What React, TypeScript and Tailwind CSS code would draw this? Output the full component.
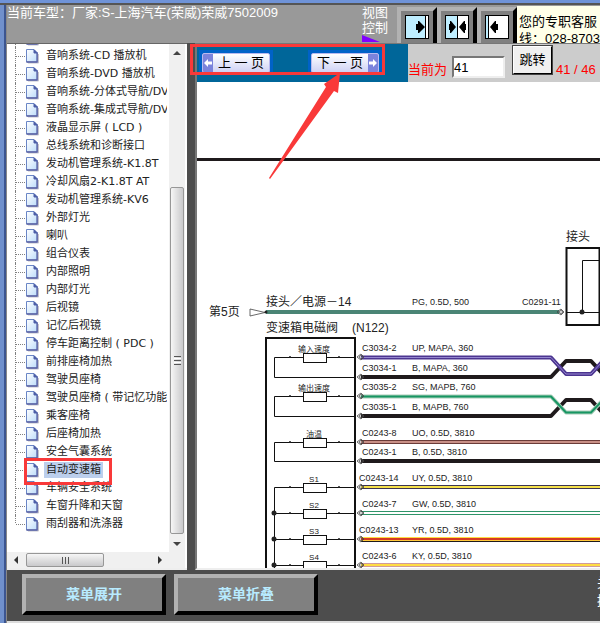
import { useState } from "react";

const treeItems = [
  "音响系统",
  "音响系统-CD 播放机",
  "音响系统-DVD 播放机",
  "音响系统-分体式导航/DVD",
  "音响系统-集成式导航/DVD",
  "液晶显示屏 ( LCD )",
  "总线系统和诊断接口",
  "发动机管理系统-K1.8T",
  "冷却风扇2-K1.8T AT",
  "发动机管理系统-KV6",
  "外部灯光",
  "喇叭",
  "组合仪表",
  "内部照明",
  "内部灯光",
  "后视镜",
  "记忆后视镜",
  "停车距离控制 ( PDC )",
  "前排座椅加热",
  "驾驶员座椅",
  "驾驶员座椅 ( 带记忆功能 )",
  "乘客座椅",
  "后座椅加热",
  "安全气囊系统",
  "自动变速箱",
  "车辆安全系统",
  "车窗升降和天窗",
  "雨刮器和洗涤器",
];

type Wire = {
  y: number;
  pin: string;
  label: string;
  pinX?: number;
};

const wires: Wire[] = [
  { y: 357, pin: "C3034-2", label: "UP, MAPA, 360" },
  { y: 377, pin: "C3034-1", label: "B, MAPA, 360" },
  { y: 396, pin: "C3035-2", label: "SG, MAPB, 760" },
  { y: 416, pin: "C3035-1", label: "B, MAPB, 760" },
  { y: 442, pin: "C0243-8", label: "UO, 0.5D, 3810" },
  { y: 461, pin: "C0243-1", label: "B, 0.5D, 3810" },
  { y: 487, pin: "C0243-14", label: "UY, 0.5D, 3810", pinX: 359 },
  { y: 513, pin: "C0243-7", label: "GW, 0.5D, 3810" },
  { y: 539, pin: "C0243-13", label: "YR, 0.5D, 3810", pinX: 359 },
  { y: 565, pin: "C0243-6", label: "KY, 0.5D, 3810" },
];

// wires that run straight to the edge, drawn as layered strokes
const straight = [
  { y: 442, layers: [["#6b3b38", 4], ["#c88f86", 2]] },
  { y: 461, layers: [["#1f1a1c", 4]] },
  { y: 487, layers: [["#3d3550", 4], ["#f5e04a", 2]] },
  { y: 513, layers: [["#2f9468", 4], ["#ffffff", 2]] },
  { y: 565, layers: [["#cf9a9c", 4], ["#ffdc42", 2]] },
] as { y: number; layers: [string, number][] }[];

const resistors = [
  { y: 357, name: "输入速度" },
  { y: 396, name: "输出速度" },
  { y: 442, name: "油温" },
  { y: 487, name: "S1" },
  { y: 513, name: "S2" },
  { y: 539, name: "S3" },
  { y: 565, name: "S4" },
];

function PageIcon() {
  return (
    <svg className="ml-px shrink-0" width="13" height="15" viewBox="0 0 13 15">
      <defs>
        <linearGradient id="paper" x1="0" y1="0" x2="1" y2="1">
          <stop offset="0" stopColor="#ffffff" />
          <stop offset="1" stopColor="#bcdcfa" />
        </linearGradient>
      </defs>
      <path d="M2 14H12.500V5" fill="none" stroke="#c4c4cc" />
      <path d="M0.500 0.500H8L11 3.500V13H0.500Z" fill="url(#paper)" stroke="#6a86c6" />
      <path d="M11.200 3.500V13H0.500" fill="none" stroke="#5b62a2" strokeWidth="1.300" />
      <path d="M8 0.800V4H11.200Z" fill="#4d5fa8" stroke="#4d5fa8" />
    </svg>
  );
}

function Tree() {
  const [selected, setSelected] = useState("自动变速箱");

  return (
    <ul className="-mt-[15px] w-max">
      {treeItems.map((item, index) => (
        <li key={index} className="relative flex h-[18px] items-center pl-[7px]">
          <span
            className={`w-px shrink-0 border-l border-dotted border-[#808080] ${
              index === treeItems.length - 1 ? "h-2 self-start" : "h-full"
            }`}
          ></span>
          <span className="w-[9px] shrink-0 border-t border-dotted border-[#808080]"></span>
          <PageIcon />
          <button
            className={`ml-[5px] h-4 px-[2px] text-[11px] leading-4 whitespace-nowrap text-[#222] ${
              selected === item ? "bg-[#bccfec]" : ""
            }`}
            onClick={() => setSelected(item)}
          >
            {item}
          </button>
          {selected === item && (
            <span className="pointer-events-none absolute -top-[3px] -right-2 left-4 z-10 h-[27px] max-w-[88px] border-3 border-[#f93939]"></span>
          )}
        </li>
      ))}
    </ul>
  );
}

function VerticalScrollbar() {
  return (
    <div className="flex w-4 shrink-0 flex-col items-center bg-[#f0f0f0]">
      <svg width="16" height="16" viewBox="0 0 16 16">
        <path d="M4 11L8 7L12 11Z" fill="#444" />
      </svg>
      <div className="grow-[130]"></div>
      <div className="flex w-[14px] grow-[344] flex-col items-center justify-center gap-px rounded-[2px] border border-[#979797] bg-linear-to-r from-[#f6f6f6] to-[#c9c9cb]">
        <span className="h-px w-[7px] bg-[#555]"></span>
        <span className="h-px w-[7px] bg-white"></span>
        <span className="h-px w-[7px] bg-[#555]"></span>
        <span className="h-px w-[7px] bg-white"></span>
        <span className="h-px w-[7px] bg-[#555]"></span>
      </div>
      <svg width="16" height="18" viewBox="0 0 16 18">
        <path d="M4 8L8 12L12 8Z" fill="#444" />
      </svg>
    </div>
  );
}

function HorizontalScrollbar() {
  return (
    <div className="flex h-4 shrink-0 items-center bg-[#f0f0f0] pr-4">
      <svg className="shrink-0" width="19" height="16" viewBox="0 0 19 16">
        <path d="M11 4L7 8L11 12Z" fill="#333" />
      </svg>
      <div className="flex h-[14px] w-[78px] items-center justify-center gap-[2px] rounded-[2px] border border-[#979797] bg-linear-to-b from-[#f6f6f6] to-[#c9c9cb]">
        <span className="h-[7px] w-px bg-[#555]"></span>
        <span className="h-[7px] w-px bg-[#555]"></span>
        <span className="h-[7px] w-px bg-[#555]"></span>
      </div>
      <div className="grow"></div>
      <svg className="shrink-0" width="16" height="16" viewBox="0 0 16 16">
        <path d="M5 4L9 8L5 12Z" fill="#333" />
      </svg>
    </div>
  );
}

function ViewButton({ kind, label }: { kind: "right" | "both" | "left"; label: string }) {
  return (
    <button
      aria-label={label}
      className="flex h-10 w-10 shrink-0 items-center justify-center border-4 border-t-[#b2b2b2] border-r-black border-b-[#777] border-l-[#b2b2b2] bg-[#808080]"
    >
      <svg width="24" height="24" viewBox="0 0 24 24">
        <rect x="0.500" y="0.500" width="23" height="23" fill="#fff" stroke="#000" />
        {kind === "right" && (
          <>
            <path d="M1 1H20V23H1Z" fill="#bfeeff" />
            <path d="M20.500 1V23" stroke="#000" />
            <path d="M11 9H13V6H14L20 12L14 18H13V15H11Z" fill="#000" />
          </>
        )}
        {kind === "both" && (
          <>
            <path d="M1 1H12V23H1Z" fill="#bfeeff" />
            <path d="M12.500 1V23" stroke="#000" />
            <path d="M4 9H5V6H6L11 12L6 18H5V15H4ZM21 9H20V6H19L14 12L19 18H20V15H21Z" fill="#000" />
          </>
        )}
        {kind === "left" && (
          <>
            <path d="M1 1H3V23H1Z" fill="#bfeeff" />
            <path d="M3.500 1V23" stroke="#000" />
            <path d="M13 9H11V6H10L5 12L10 18H11V15H13Z" fill="#000" />
          </>
        )}
      </svg>
    </button>
  );
}

function Arrow({ flip }: { flip?: boolean }) {
  return (
    <span className="flex w-[10px] items-center justify-center bg-[#7b83dc]">
      <svg className={flip ? "rotate-180" : ""} width="8" height="8" viewBox="0 0 8 8">
        <path d="M0 4L4 0V2.500H8V5.500H4V8Z" fill="#fff" />
      </svg>
    </span>
  );
}

function Header() {
  return (
    <header className="flex h-[38px] shrink-0 overflow-hidden bg-[#999] text-[13px] leading-[15px] text-white">
      <p className="min-w-0 flex-1 whitespace-nowrap">当前车型：厂家:S-上海汽车(荣威)荣威7502009</p>
      <div className="w-[35px] shrink-0">
        <p>视图控制</p>
        <svg width="18" height="7" viewBox="0 0 18 7">
          <path d="M0 0L18 7H0Z" fill="#8000ff" />
        </svg>
      </div>
      <div className="flex shrink-0 pt-[2px]">
        <ViewButton kind="right" label="展开菜单" />
        <ViewButton kind="both" label="平分视图" />
        <ViewButton kind="left" label="收起菜单" />
      </div>
      <div className="mt-px w-[83px] shrink-0 overflow-hidden bg-[#ffffe8] pt-[7px] pl-[2px] leading-[17px] whitespace-nowrap text-black">
        <p>您的专职客服</p>
        <p>线：028-870383</p>
      </div>
    </header>
  );
}

function Toolbar() {
  const [page, setPage] = useState("41");

  return (
    <div className="relative flex h-[38px] shrink-0 justify-between bg-[#069]">
      <div className="flex items-start gap-[35px] pt-[6px] pl-[2px] text-[13px] text-black">
        <button className="bg-[#0062c8] p-[3px] pb-0">
          <span className="flex h-5 w-[68px] overflow-hidden rounded-[2px] border border-[#b9b9ee] bg-linear-to-b from-white to-[#cfd2f4]">
            <Arrow />
            <span className="flex-1 text-center leading-[18px]">上 一 页</span>
          </span>
        </button>
        <button className="bg-[#0062c8] p-[3px] pb-0">
          <span className="flex h-5 w-[68px] overflow-hidden rounded-[2px] border border-[#b9b9ee] bg-linear-to-b from-white to-[#cfd2f4]">
            <span className="flex-1 text-center leading-[18px]">下 一 页</span>
            <Arrow flip />
          </span>
        </button>
      </div>
      <div className="flex w-48 shrink-0 bg-[#ccc] text-[13px] whitespace-nowrap text-[#f00]">
        <label htmlFor="page" className="pt-[17px] leading-[17px]">
          当前为
        </label>
        <input
          id="page"
          className="mt-3 ml-[5px] h-[22px] w-[53px] border-2 border-t-[#777] border-r-[#eee] border-b-[#eee] border-l-[#777] bg-white text-[13px] text-black outline-none"
          value={page}
          onChange={(e) => setPage(e.target.value)}
        />
        <button className="mt-[2px] ml-2 h-7 w-[39px] border border-t-white border-r-black border-b-black border-l-white bg-[#f0f0f0] text-[13px] text-black outline outline-[#444]">
          跳转
        </button>
        <span className="pt-[17px] pl-1 leading-[17px]">41 / 46</span>
      </div>

      {/* callout */}
      <div className="absolute top-0 -left-[7px] h-[31px] w-[195px] border-3 border-[#f93939]"></div>
      <svg className="absolute top-[29px] left-[69px]" width="80" height="108" viewBox="266 73 80 108">
        <path d="M269 178L326 87L324 84L340 73L338 93L334 91L270 179Z" fill="#f93939" />
      </svg>
    </div>
  );
}

function Pin({ y, x = 361 }: { y: number; x?: number }) {
  return (
    <g fill="none" stroke="#444" strokeWidth="0.800">
      <path d={`M${x - 4} ${y}L${x} ${y - 3}L${x + 3} ${y}L${x} ${y + 3}Z`} />
      <circle cx={x} cy={y} r="1.500" />
    </g>
  );
}

function Diagram() {
  return (
    <svg
      className="block h-full w-full"
      viewBox="197 82 403 486"
      preserveAspectRatio="xMinYMin slice"
      fontFamily='"Liberation Sans", "Noto Sans CJK SC", sans-serif'
      fill="#222"
    >
      <path d="M197 159.500H600" stroke="#1f1a1c" strokeWidth="3" />

      {/* power supply */}
      <text x="209" y="316" fontSize="12">第5页</text>
      <path d="M250 309V316L265 312.500Z" fill="none" stroke="#444" strokeWidth="0.800" />
      <text x="266" y="306" fontSize="12">接头／电源－14</text>
      <path d="M266 312H559" stroke="#4a8575" strokeWidth="4" />
      <circle cx="266" cy="312" r="1.500" />
      <text x="412" y="305" fontSize="9">PG, 0.5D, 500</text>
      <text x="522" y="305" fontSize="9">C0291-11</text>
      <Pin y={312} x={561} />

      <text x="566" y="241" fontSize="12">接头</text>
      <rect x="566.500" y="248" width="33" height="77" fill="#fff" stroke="#111" strokeWidth="2" />
      <path d="M599 260.500H582.500V312.500M567 312.500H599" fill="none" stroke="#111" />
      <circle cx="582" cy="312" r="2.500" />

      {/* solenoid valve block */}
      <text x="266" y="332" fontSize="12">变速箱电磁阀</text>
      <text x="352" y="332" fontSize="12">(N122)</text>
      <path d="M266 570V338H355V570" fill="none" stroke="#111" strokeWidth="2" />
      <path
        d="M355 357.500H274.500V377.500H355M355 396.500H274.500V416.500H355M355 442.500H274.500V461.500H355"
        fill="none"
        stroke="#111"
      />
      <path d="M274.500 570V487.500H355M274 513.500H355M274 539.500H355M274 565.500H355" fill="none" stroke="#111" />
      <circle cx="274" cy="513" r="2.500" />
      <circle cx="274" cy="539" r="2.500" />
      <circle cx="274" cy="565" r="2.500" />
      {resistors.map(({ y, name }) => (
        <g key={name}>
          <rect x="303.500" y={y - 3.5} width="23" height="9" fill="#fff" stroke="#111" />
          <circle cx="290" cy={y} r="1" />
          <circle cx="339" cy={y} r="1" />
          <text x="314" y={y - 5} fontSize="8" textAnchor="middle">
            {name}
          </text>
        </g>
      ))}

      {/* twisted pairs */}
      <g fill="none" strokeLinejoin="round">
        <path d="M361 377H551L566 361H591L602 373" stroke="#1f1a1c" strokeWidth="4" />
        <path d="M361 357.500H551L566 374H591L602 362" stroke="#4c3590" strokeWidth="4" />
        <path d="M361 357.500H551L566 374H591L602 362" stroke="#9486cf" strokeWidth="1" />
        <path d="M361 416H551L566 400H591L602 412" stroke="#1f1a1c" strokeWidth="4" />
        <path d="M361 396.500H551L566 412.500H591L602 401" stroke="#a9ccb8" strokeWidth="4" />
        <path d="M361 396.500H551L566 412.500H591L602 401" stroke="#179663" strokeWidth="2" />
      </g>

      {straight.map(({ y, layers }) =>
        layers.map(([color, width]) => (
          <path key={`${y}${color}`} d={`M361 ${y}H600`} stroke={color} strokeWidth={width} />
        ))
      )}
      <path d="M361 537.500H600" stroke="#ffdc42" />
      <path d="M361 539H600" stroke="#d63a22" strokeWidth="2" />
      <path d="M361 540.500H600" stroke="#ffc83a" />
      <path d="M361 541.500H600" stroke="#1f1a1c" />

      {wires.map(({ y, pin, label, pinX }) => (
        <g key={pin}>
          <Pin y={y} />
          <text x={pinX ?? 362} y={y - 6} fontSize="9">
            {pin}
          </text>
          <text x="412" y={y - 6} fontSize="9">
            {label}
          </text>
        </g>
      ))}
    </svg>
  );
}

function Footer() {
  const button =
    "h-[41px] w-36 border-4 border-t-[#b2b2b2] border-r-black border-b-black border-l-[#b2b2b2] bg-[#808080] text-[14px] font-bold text-[#b8ebff]";

  return (
    <footer className="flex h-[53px] shrink-0 gap-2 overflow-hidden border-b-2 border-[#ddd] bg-[#4d4d4d] pt-1 pl-[15px]">
      <button className={button}>菜单展开</button>
      <button className={button}>菜单折叠</button>
      <div className="ml-auto w-[3px] overflow-hidden text-[13px] leading-[18px] text-white">
        <p>关</p>
        <p>控</p>
      </div>
    </footer>
  );
}

export default function App() {
  return (
    <div className="flex h-screen flex-col overflow-hidden bg-[#4d4d4d] font-['Liberation_Sans','Noto_Sans_CJK_SC',sans-serif]">
      <div className="h-[5px] shrink-0 border-b-2 border-[#555] bg-[#6f93d8]"></div>
      <div className="flex min-h-0 flex-1">
        <div className="w-[6px] shrink-0 border-r-2 border-[#3c5590] bg-[#7090cc]"></div>
        <div className="flex min-w-0 flex-1 flex-col border-l border-[#888]">
          <Header />
          <main className="flex min-h-0 flex-1">
            <nav className="flex w-[180px] shrink-0 flex-col border-t border-b-2 border-[#666] border-b-[#eee] bg-white pr-[2px] font-['DejaVu_Sans','Noto_Sans_CJK_SC',sans-serif]">
              <div className="flex min-h-0 flex-1">
                <div className="mr-[2px] ml-px min-w-0 flex-1 overflow-hidden">
                  <Tree />
                </div>
                <VerticalScrollbar />
              </div>
              <HorizontalScrollbar />
            </nav>
            <section className="ml-2 flex min-w-0 flex-1 flex-col border-t border-b-2 border-l-2 border-[#777] border-b-[#eee] bg-white">
              <Toolbar />
              <div className="min-h-0 flex-1 overflow-hidden">
                <Diagram />
              </div>
            </section>
          </main>
          <Footer />
        </div>
      </div>
    </div>
  );
}
